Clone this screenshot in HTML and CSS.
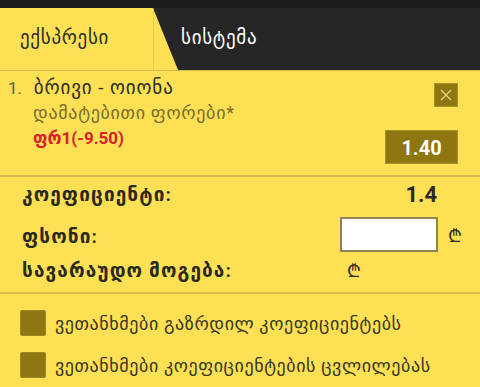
FILE: index.html
```html
<!DOCTYPE html>
<html lang="ka">
<head>
    <meta charset="UTF-8">
    <meta name="viewport" content="width=device-width, initial-scale=1.0">
    <title>ბილეთი</title>
    <link rel="stylesheet" href="styles.css">
</head>
<body>
    <div class="topbar"></div>

    <div class="tabs">
        <div class="tab active">ექსპრესი</div>
        <div class="tab">სისტემა</div>
    </div>

    <div class="bet">
        <div class="bet-info">
            <div class="bet-title"><span class="num">1.</span> ბრივი - ოიონა</div>
            <div class="bet-market">დამატებითი ფორები*</div>
            <div class="bet-pick">ფრ1(-9.50)</div>
        </div>
        <div class="bet-side">
            <button class="close-btn">
                <svg width="12" height="12" viewBox="0 0 12 12">
                    <path d="M1 1 L11 11 M11 1 L1 11" stroke="#e8d57e" stroke-width="1.3" fill="none"/>
                </svg>
            </button>
            <div class="odd">1.40</div>
        </div>
    </div>

    <div class="totals">
        <div class="total-row first">
            <span class="label">კოეფიციენტი:</span>
            <span class="coef">1.4</span>
        </div>
        <div class="total-row stake-row">
            <span class="label">ფსონი:</span>
            <span class="stake">
                <input type="text" class="stake-input">
                <span class="lari">₾</span>
            </span>
        </div>
        <div class="total-row last">
            <span class="label">სავარაუდო მოგება:</span>
            <span class="win"><span class="lari">₾</span></span>
        </div>
    </div>

    <div class="options">
        <label class="option"><span class="check"></span>ვეთანხმები გაზრდილ კოეფიციენტებს</label>
        <label class="option"><span class="check"></span>ვეთანხმები კოეფიციენტების ცვლილებას</label>
    </div>
</body>
</html>
```

FILE: styles.css
```css
body {
    margin: 0;
    width: 480px;
    height: 387px;
    overflow: hidden;
    background-color: #fee054;
    font-family: 'Roboto', 'DejaVu Sans', sans-serif;
    color: #2a2a22;
}

.topbar {
    height: 8px;
    background-color: #1d1d1d;
}

.tabs {
    display: flex;
    height: 62px;
    background-color: #262626;
    border-bottom: 1px solid #d6bc48;
}

.tab {
    display: flex;
    align-items: center;
    padding: 0 0 4px 20px;
    font-size: 19px;
    letter-spacing: 0.7px;
    color: #ffffff;
}

.tab.active {
    width: 158px;
    background-color: #fee054;
    color: #2e2e26;
    clip-path: polygon(0 0, 153px 0, 178px 100%, 0 100%);
    background-image: linear-gradient(#e9cd4c, #e9cd4c);
    background-size: 1px 100%;
    background-position: 153px 0;
    background-repeat: no-repeat;
}

.tab:not(.active) {
    padding-left: 3px;
}

.bet {
    display: flex;
    justify-content: space-between;
    padding: 7px 22px 11px 8px;
    border-bottom: 2px solid #d6bc48;
}

.bet-title {
    font-size: 19px;
    line-height: 20px;
    letter-spacing: 0.9px;
    color: #2e2e26;
}

.bet-title .num {
    font-size: 17px;
    color: #5c5a40;
    letter-spacing: 0;
    margin-right: 6px;
}

.bet-market {
    font-size: 18px;
    line-height: 20px;
    letter-spacing: 0.7px;
    color: #7a6c2c;
    margin: 5px 0 0 25px;
}

.bet-pick {
    font-size: 17px;
    line-height: 20px;
    font-weight: bold;
    color: #d8212b;
    margin: 5px 0 0 25px;
}

.bet-side {
    display: flex;
    flex-direction: column;
    align-items: flex-end;
    gap: 23px;
    padding-top: 5px;
}

.close-btn {
    display: flex;
    align-items: center;
    justify-content: center;
    width: 24px;
    height: 24px;
    padding: 0;
    border: 1px solid #a89126;
    background-color: #8e7610;
}

.odd {
    width: 73px;
    height: 34px;
    line-height: 34px;
    text-align: center;
    background-color: #8e7610;
    color: #ffffff;
    font-size: 20px;
    font-weight: bold;
    border: 1px solid #a89126;
    box-sizing: border-box;
}

.totals {
    padding: 4px 18px 10px 22px;
    border-bottom: 2px solid #d6bc48;
}

.total-row {
    display: flex;
    justify-content: space-between;
    align-items: center;
}

.total-row.first {
    height: 26px;
}

.total-row.stake-row {
    margin-top: 10px;
}

.stake-row .label {
    padding-top: 4px;
}

.total-row.last {
    height: 24px;
    margin-top: 6px;
}

.label {
    font-size: 19px;
    font-weight: bold;
    letter-spacing: 1.1px;
    color: #2a2a1c;
}

.coef {
    font-size: 22px;
    font-weight: bold;
    margin-right: 25px;
}

.stake {
    display: flex;
    align-items: center;
    gap: 10px;
}

.stake-input {
    width: 98px;
    height: 35px;
    box-sizing: border-box;
    border: 2px solid #8e8256;
    background: #ffffff;
    margin: 0;
}

.lari {
    font-family: 'DejaVu Sans', sans-serif;
    font-size: 18px;
    color: #2a2a22;
}

.win {
    width: 115px;
}

.options {
    padding: 16px 20px;
    display: flex;
    flex-direction: column;
    gap: 16px;
}

.option {
    display: flex;
    align-items: center;
    gap: 9px;
    font-size: 18px;
    letter-spacing: 0.6px;
    color: #3a3520;
}

.check {
    width: 26px;
    height: 26px;
    border-radius: 2px;
    background-color: #8e7610;
    border: 1px solid #9c8624;
    box-sizing: border-box;
}
```
